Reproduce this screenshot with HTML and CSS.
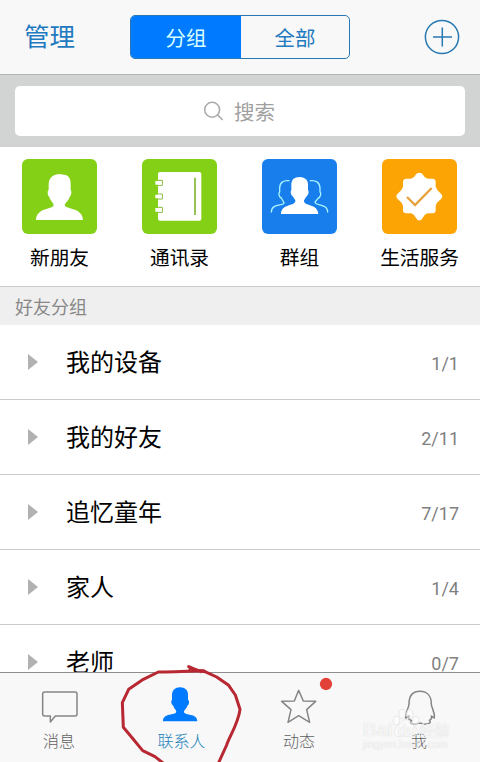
FILE: index.html
```html
<!DOCTYPE html>
<html lang="zh-CN">
<head>
<meta charset="utf-8">
<title>联系人</title>
<link rel="stylesheet" href="styles.css">
</head>
<body>
<div class="app">
  <header class="header">
    <span class="manage">管理</span>
    <div class="segments"><span class="segment selected">分组</span><span class="segment">全部</span></div>
    <svg class="add" viewBox="0 0 36 36"><circle cx="18" cy="18" r="16.6"/><path d="M9 18H28M18.3 8.5V27.5"/></svg>
  </header>
  <div class="search">
    <div class="search-box">
      <svg class="search-icon" viewBox="610 300 62 62"><circle cx="637" cy="326" r="22"/><path d="M653 341L668 356"/></svg>
      <span>搜索</span>
    </div>
  </div>
  <nav class="shortcuts">
    <div class="shortcut">
      <svg class="tile green" viewBox="66 42 225 225"><path fill="#fff" d="M180 87C160 87 146 98 146 118L146 135C141 138 143 152 148 156C151 168 160 172 161 181C159 194 110 187 108 225H249C247 187 198 194 194 181C196 172 206 167 209 156C214 152 216 138 212 135V116C212 104 208 96 202 92C196 88 190 90 180 87Z"/></svg>
      <span>新朋友</span>
    </div>
    <div class="shortcut">
      <svg class="tile green" viewBox="426 42 225 225"><rect x="474" y="81" width="130" height="146" rx="6" fill="#fff"/><path d="M585 98V210" stroke="#82b735" stroke-width="5"/><g fill="#fff" stroke="#82b735" stroke-width="3"><path d="M474 106H487V121H474M474 147H487V162H474M474 187H487V202H474"/></g><path fill="#fff" d="M466 108H485V119H466ZM466 149H485V160H466ZM466 189H485V200H466Z"/></svg>
      <span>通讯录</span>
    </div>
    <div class="shortcut">
      <svg class="tile blue" viewBox="66 42 225 225"><g fill="none" stroke="#a8f2ff" stroke-width="4" stroke-linecap="round"><path d="M147 107C130 105 119 113 119 130V141C114 145 118 157 124 159L132 173C132 184 94 174 94 201"/><path d="M211 107C228 105 240 113 240 130V141C245 145 241 157 235 159L225 171C225 184 263 174 263 201"/></g><path fill="#fff" d="M180 96C162 96 153 104 154 123V136C150 140 153 151 158 154L166 166C168 186 124 174 123 207H235C233 174 190 186 192 166L200 154C205 151 208 140 204 136V119C204 105 196 98 180 96Z"/></svg>
      <span>群组</span>
    </div>
    <div class="shortcut">
      <svg class="tile orange" viewBox="426 42 225 225"><path fill="#fff" stroke="#fff" stroke-width="4" stroke-linejoin="round" d="M538 85Q544 85 548 91Q553 102 565 103H578Q585 104 585 111V126Q588 136 598 144Q612 154 598 164Q587 171 585 183V195Q585 203 578 203H562Q552 206 547 217Q538 232 529 217Q524 206 514 203H499Q491 203 491 195V183Q489 171 478 164Q464 154 478 144Q488 136 491 126V111Q491 104 499 103H511Q523 102 528 91Q532 85 538 85Z"/><path d="M501 156L525 180L575 129" fill="none" stroke="#e5a23c" stroke-width="7"/></svg>
      <span>生活服务</span>
    </div>
  </nav>
  <h2 class="section-title">好友分组</h2>
  <main class="groups">
    <div class="group"><i class="arrow"></i><span class="name">我的设备</span><span class="count">1/1</span></div>
    <div class="group"><i class="arrow"></i><span class="name">我的好友</span><span class="count">2/11</span></div>
    <div class="group"><i class="arrow"></i><span class="name">追忆童年</span><span class="count">7/17</span></div>
    <div class="group"><i class="arrow"></i><span class="name">家人</span><span class="count">1/4</span></div>
    <div class="group"><i class="arrow"></i><span class="name">老师</span><span class="count">0/7</span></div>
  </main>
  <footer class="tabs">
    <div class="tab">
      <svg class="tab-icon" viewBox="0 339 360 159"><path d="M134 396H225Q231 396 231 402V462Q231 468 225 468H166L151 486V468H134Q128 468 128 462V402Q128 396 134 396Z"/></svg>
      <span>消息</span>
    </div>
    <div class="tab active">
      <svg class="tab-icon" viewBox="360 339 360 159"><path class="solid" d="M540 382C526 382 516 391 516 405V419C512 422 514 434 520 437C522 447 529 448 529 456C526 467 489 458 489 484H592C591 458 555 468 552 456C552 448 560 447 562 437C568 434 569 422 564 419V404C564 391 555 382 540 382Z"/></svg>
      <span>联系人</span>
    </div>
    <div class="tab">
      <svg class="tab-icon" viewBox="0 339 360 159"><path d="M176 391L190 423L227 424L200 449L209 487L176 467L144 487L153 449L125 424L163 423Z"/><circle class="dot" cx="258" cy="372" r="18.5"/></svg>
      <span>动态</span>
    </div>
    <div class="tab">
      <svg class="tab-icon" viewBox="360 339 360 159"><path d="M540 394C515 394 507 411 507 432C507 446 495 453 497 474L507 468C503 478 510 480 515 482C506 490 515 492 526 493L534 490H545L552 493C568 492 575 488 568 481C573 478 578 476 574 468L583 474C586 455 574 446 574 432C574 410 563 394 540 394Z"/></svg>
      <span>我</span>
    </div>
    <div class="watermark">
      <svg class="paw" viewBox="0 0 30 32"><ellipse cx="5" cy="13" rx="3.3" ry="4.5"/><ellipse cx="11" cy="6" rx="3.3" ry="4.7"/><ellipse cx="19" cy="6" rx="3.3" ry="4.7"/><ellipse cx="25" cy="13" rx="3.3" ry="4.5"/><path d="M15 12C10 12 9 17 5 20C0 25 4 31 10 29H20C26 31 30 25 25 20C21 17 20 12 15 12Z"/></svg>
      <span class="brand"><b>Bai</b><b class="du">du</b><b class="exp">经验</b></span>
      <span class="site">jingyan.baidu.com</span>
    </div>
  </footer>
  <svg class="scribble" viewBox="345 306 390 300"><path d="M566 320L602 335M612 332C575 331 535 338 475 336L430 358L386 388L367 428L370 502L400 538L428 572L465 590L488 608"/><path d="M570 327L615 335L650 351L686 376L706 405L720 448C715 490 688 530 680 555L655 610"/></svg>
</div>
</body>
</html>
```
FILE: styles.css
```css
* { box-sizing: border-box; }
body { margin: 0; background: #fff; font-family: "Noto Sans CJK SC", sans-serif; font-weight: 400; }
.app { position: relative; width: 480px; height: 762px; overflow: hidden; display: flex; flex-direction: column; }
.header { height: 75px; flex: none; display: grid; grid-template-columns: 130px 220px 1fr; background: #f8f8f8; border-bottom: 1px solid #b2b4b4; color: #1f7ac0; }
.manage { padding-left: 24px; font-size: 25.5px; line-height: 69px; }
.segments { margin-top: 15px; height: 44px; display: flex; border: 1px solid #2779b5; border-radius: 5px; overflow: hidden; font-size: 20.5px; line-height: 42px; text-align: center; }
.segment { flex: 1; }
.selected { flex: 0 0 110px; background: #007aff; color: #d9ffff; }
.add { width: 36px; height: 36px; margin: 19px 20px 0 0; justify-self: end; fill: none; stroke: #2878b2; stroke-width: 1.5; }
.search { height: 72px; flex: none; padding: 11px 15px; background: #d2d4d3; }
.search-box { height: 50px; border-radius: 5px; background: #fff; display: flex; align-items: center; justify-content: center; gap: 10px; padding-right: 2px; color: #a0a0a0; font-size: 20.5px; line-height: 50px; }
.search-icon { width: 21px; height: 21px; fill: none; stroke: #aaa; stroke-width: 4.5; }
.shortcuts { height: 140px; flex: none; display: grid; grid-template-columns: repeat(4, 120px); padding-top: 12px; border-bottom: 1px solid #cacccb; }
.shortcut { display: flex; flex-direction: column; align-items: center; padding-right: 1px; font-size: 19.7px; line-height: 46px; color: #000; }
.tile { width: 75px; height: 75px; border-radius: 6px; flex: none; }
.green { background: #83d017; }
.blue { background: #187eec; }
.orange { background: #fca404; }
.section-title { margin: 0; height: 38px; flex: none; padding-left: 15px; background: #efefef; font-size: 18px; font-weight: 400; line-height: 38px; color: #888; }
.groups { flex: 1; min-height: 0; overflow: hidden; }
.group { height: 75px; display: flex; align-items: center; padding: 0 21px 0 28px; border-bottom: 1px solid #cacaca; }
.arrow { width: 0; height: 0; border-left: 10px solid #b1b1b1; border-top: 8.5px solid transparent; border-bottom: 8.5px solid transparent; }
.name { margin-left: 28px; padding-bottom: 3px; font-size: 24px; line-height: 71px; color: #000; }
.count { margin-left: auto; padding-top: 3px; font: 18px/24px Roboto, sans-serif; color: #808080; }
.tabs { position: relative; height: 90px; flex: none; display: grid; grid-template-columns: repeat(4, 120px); background: #f8f8f8; border-top: 1px solid #8e8e8e; }
.tab { display: flex; flex-direction: column; align-items: center; font-size: 16px; font-weight: 300; line-height: 28px; color: #606060; }
.tab span { padding-right: 2px; }
.tab.active span { padding-right: 0; padding-left: 3px; }
.tab-icon { width: 120px; height: 53px; flex: none; fill: none; stroke: #858585; stroke-width: 4.5; stroke-linejoin: round; }
.tab.active { color: #2585ba; }
.tab-icon .solid { fill: #007aff; stroke: none; }
.tab-icon .dot { fill: #e24137; stroke: none; }
.scribble { position: absolute; left: 115px; top: 662px; width: 130px; height: 100px; fill: none; stroke: #b72832; stroke-width: 9; stroke-linejoin: round; stroke-linecap: round; }
.watermark { position: absolute; left: 363px; top: 35px; width: 90px; height: 48px; color: rgba(255,255,255,.75); text-shadow: 0 0 1px rgba(150,150,150,.4); }
.paw { position: absolute; left: 28px; top: 0; width: 30px; height: 31px; fill: rgba(255,255,255,.4); stroke: #e3e3e3; stroke-width: .8; }
.brand { position: absolute; left: 0; top: 12px; display: flex; align-items: center; font: 19px/20px "Liberation Sans", sans-serif; }
.du { width: 27px; padding-left: 5px; font-size: 15px; }
.brand .exp { font: 700 15px/20px "Noto Sans CJK SC", sans-serif; }
.site { position: absolute; left: 0; top: 29px; font: 10.5px/14px "Liberation Sans", sans-serif; white-space: nowrap; }
```
